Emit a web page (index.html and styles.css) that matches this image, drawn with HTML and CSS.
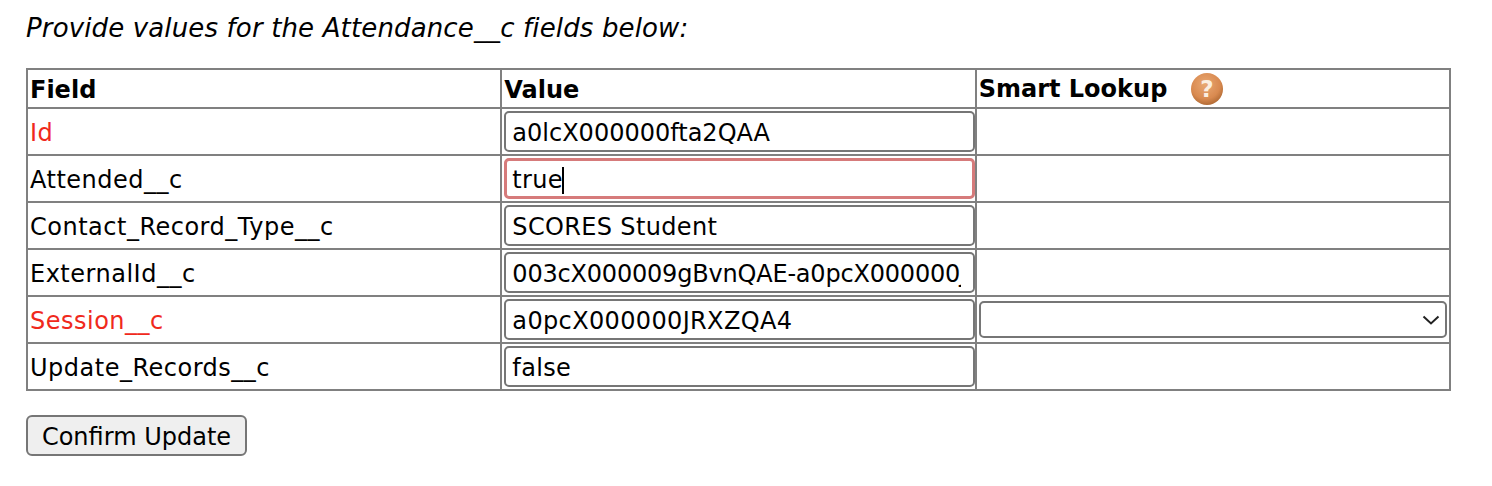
FILE: index.html
```html
<!DOCTYPE html>
<html>
<head>
    <meta charset="UTF-8">
    <title>Confirm Update</title>
    <link rel="stylesheet" href="styles.css">
</head>
<body>
    <p class="intro">Provide values for the Attendance__c fields below:</p>

    <table class="fields">
        <tr class="head-row">
            <th>Field</th>
            <th>Value</th>
            <th class="lookup-head">
                <span>Smart Lookup</span>
                <svg class="help-icon" width="34" height="34" viewBox="0 0 34 34">
                    <defs>
                        <radialGradient id="helpBall" cx="45%" cy="35%" r="70%">
                            <stop offset="0%" stop-color="#e9a873"/>
                            <stop offset="65%" stop-color="#d98a50"/>
                            <stop offset="100%" stop-color="#a9642f"/>
                        </radialGradient>
                    </defs>
                    <circle cx="17" cy="17" r="16" fill="url(#helpBall)"/>
                    <text x="17" y="25" text-anchor="middle" class="help-mark">?</text>
                </svg>
            </th>
        </tr>
        <tr>
            <td class="name required">Id</td>
            <td class="value-cell"><input class="value-input tight" type="text" value="a0lcX000000fta2QAA"></td>
            <td></td>
        </tr>
        <tr>
            <td class="name">Attended__c</td>
            <td class="value-cell">
                <input class="value-input is-focused" type="text" value="true">
                <span class="caret"></span>
            </td>
            <td></td>
        </tr>
        <tr>
            <td class="name">Contact_Record_Type__c</td>
            <td class="value-cell"><input class="value-input" type="text" value="SCORES Student"></td>
            <td></td>
        </tr>
        <tr>
            <td class="name">ExternalId__c</td>
            <td class="value-cell">
                <input class="value-input tighter" type="text" value="003cX000009gBvnQAE-a0pcX000000JRXZQA4">
                <span class="clip-edge"></span>
            </td>
            <td></td>
        </tr>
        <tr>
            <td class="name required">Session__c</td>
            <td class="value-cell"><input class="value-input" type="text" value="a0pcX000000JRXZQA4"></td>
            <td class="lookup-cell">
                <select class="lookup-select"><option></option></select>
                <svg class="chevron" width="18" height="10" viewBox="0 0 18 10">
                    <path d="M1.5 1.5 L9 8.5 L16.5 1.5" fill="none" stroke="#222" stroke-width="2"/>
                </svg>
            </td>
        </tr>
        <tr>
            <td class="name">Update_Records__c</td>
            <td class="value-cell"><input class="value-input" type="text" value="false"></td>
            <td></td>
        </tr>
    </table>

    <button class="confirm" type="button">Confirm Update</button>
</body>
</html>
```

FILE: styles.css
```css
body {
    margin: 0;
    padding: 13px 41px 0 26px;
    background-color: #fff;
    color: #000;
    font-family: "DejaVu Sans", Verdana, sans-serif;
    font-size: 24px;
}
.intro {
    margin: 0 0 25px 0;
    font-size: 26px;
    font-style: italic;
    letter-spacing: 0.14px;
    line-height: 30px;
}
.fields {
    width: 1425px;
    table-layout: fixed;
    border-collapse: collapse;
    border: 2px solid #808080;
}
.fields th,
.fields td {
    height: 47px;
    padding: 0 2px;
    border: 2px solid #808080;
    box-sizing: border-box;
    text-align: left;
    line-height: 28px;
}
.fields .head-row th {
    height: 39px;
    padding-top: 3px;
}
.fields .head-row .lookup-head {
    padding-top: 0;
}
.fields .name {
    padding-top: 2px;
    letter-spacing: 0.5px;
}
.lookup-head span {
    vertical-align: middle;
}
.help-icon {
    margin-left: 14px;
    vertical-align: middle;
}
.help-mark {
    fill: #fbeee0;
    font-size: 23px;
    font-weight: bold;
}
.required {
    color: #f0291c;
}
.value-cell,
.lookup-cell {
    position: relative;
}
.value-input {
    display: block;
    width: calc(100% + 2px);
    height: 41px;
    padding: 2px 7px 0 6px;
    box-sizing: border-box;
    border: 2px solid #767676;
    border-radius: 5px;
    background: #fff;
    color: #000;
    font-family: inherit;
    font-size: 24px;
    letter-spacing: 0.35px;
    outline: none;
}
.tight {
    letter-spacing: 0;
}
.tighter {
    letter-spacing: -0.2px;
}
.is-focused {
    border: 3px solid #d67b7b;
    padding: 2px 6px 0 5px;
}
.caret {
    position: absolute;
    left: 60px;
    top: 11px;
    width: 2px;
    height: 27px;
    background: #000;
}
.clip-edge {
    position: absolute;
    right: 2px;
    top: 7px;
    width: 12px;
    height: 32px;
    background: #fff;
}
.lookup-select {
    display: block;
    width: 100%;
    height: 37px;
    border: 2px solid #767676;
    border-radius: 5px;
    background: #fff;
    appearance: none;
    font-family: inherit;
    font-size: 24px;
}
.chevron {
    position: absolute;
    right: 9px;
    top: 18px;
    pointer-events: none;
}
.confirm {
    display: block;
    width: 221px;
    height: 41px;
    margin-top: 24px;
    padding: 2px 0 0 0;
    border: 2px solid #767676;
    border-radius: 6px;
    background: #efefef;
    color: #000;
    font-family: inherit;
    font-size: 24px;
}
```
